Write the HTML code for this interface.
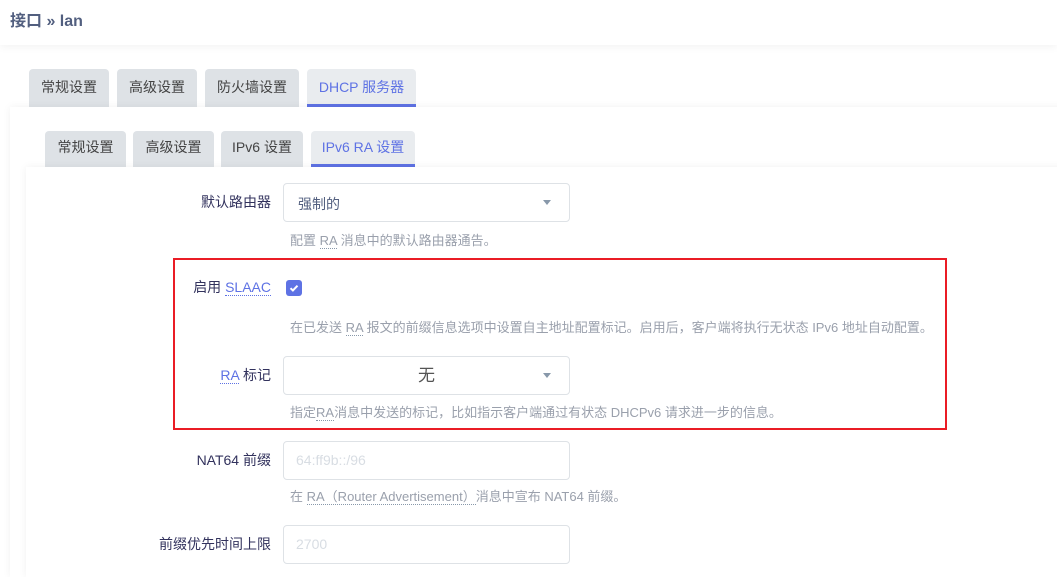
<!DOCTYPE html>
<html><head><meta charset="utf-8"><style>
body{margin:0;width:1057px;height:568px;overflow:hidden;background:#fff;font-family:"Liberation Sans","Noto Sans CJK SC",sans-serif;color:#32325d;position:relative}
.a{position:absolute}
.hdr{left:0;top:0;width:1057px;height:45px;background:#fff;box-shadow:0 2px 8px rgba(0,0,0,.05)}
.title{left:10px;top:7px;font-size:16px;font-weight:bold;color:#525f7f}
.tab{position:absolute;background:#dee2e6;border-radius:4px 4px 0 0;font-size:14px;color:#444;text-align:center;box-sizing:border-box}
.tab.on{background:#e9ecef;color:#5e72e4;border-bottom:3px solid #5e72e4}
.p1{left:10px;top:107px;width:1060px;height:470px;background:#fff;box-shadow:0 0 8px rgba(0,0,0,.06)}
.p2{left:26px;top:167px;width:1040px;height:410px;background:#fff;box-shadow:0 0 8px rgba(0,0,0,.06)}
.lbl{position:absolute;right:786px;font-size:14px;color:#32325d;white-space:nowrap}
.inp{position:absolute;left:283px;width:287px;height:39px;border:1px solid #dee2e6;border-radius:4px;box-sizing:border-box;background:#fff;font-size:14px}
.desc{position:absolute;left:290px;font-size:13px;color:#9aa0ac;white-space:nowrap}
.u{border-bottom:1px dotted #8898aa}
.lk{color:#5e72e4;border-bottom:1px dotted #5e72e4}
.arr{position:absolute;right:18px;top:16px;width:0;height:0;border-left:4px solid transparent;border-right:4px solid transparent;border-top:5px solid #8898aa}
</style></head><body>
<div class="a hdr"></div>
<div class="a title">接口 » lan</div>
<div class="tab" style="left:29px;top:69px;width:80px;height:38px;line-height:36px">常规设置</div>
<div class="tab" style="left:117px;top:69px;width:80px;height:38px;line-height:36px">高级设置</div>
<div class="tab" style="left:205px;top:69px;width:94px;height:38px;line-height:36px">防火墙设置</div>
<div class="tab on" style="left:307px;top:69px;width:109px;height:38px;line-height:36px">DHCP 服务器</div>
<div class="a p1"></div>
<div class="tab" style="left:45px;top:131px;width:81px;height:36px;line-height:33px">常规设置</div>
<div class="tab" style="left:133px;top:131px;width:81px;height:36px;line-height:33px">高级设置</div>
<div class="tab" style="left:221px;top:131px;width:82px;height:36px;line-height:33px">IPv6 设置</div>
<div class="tab on" style="left:311px;top:131px;width:104px;height:36px;line-height:33px">IPv6 RA 设置</div>
<div class="a p2"></div>

<div class="lbl" style="top:192px">默认路由器</div>
<div class="inp" style="top:183px;color:#525f7f;padding:10px 14px">强制的<div class="arr"></div></div>
<div class="desc" style="top:230px">配置 <span class="u">RA</span> 消息中的默认路由器通告。</div>

<div class="a" style="left:173px;top:258px;width:774px;height:172px;border:2px solid #ea1c25;box-sizing:border-box"></div>
<div class="lbl" style="top:277px">启用 <span class="lk">SLAAC</span></div>
<div class="a" style="left:286px;top:280px;width:16px;height:16px;background:#5e72e4;border-radius:3px"><svg width="16" height="16"><path d="M4.5 8.2l2.4 2.3 4.6-4.8" stroke="#fff" stroke-width="2" fill="none"/></svg></div>
<div class="desc" style="top:317px">在已发送 <span class="u">RA</span> 报文的前缀信息选项中设置自主地址配置标记。启用后，客户端将执行无状态 IPv6 地址自动配置。</div>
<div class="lbl" style="top:365px"><span class="lk">RA</span> 标记</div>
<div class="inp" style="top:356px;text-align:center;font-size:17px;color:#555;line-height:37px">无<div class="arr"></div></div>
<div class="desc" style="top:402px">指定<span class="u">RA</span>消息中发送的标记，比如指示客户端通过有状态 DHCPv6 请求进一步的信息。</div>

<div class="lbl" style="top:450px">NAT64 前缀</div>
<div class="inp" style="top:441px;color:#d8dde3;padding:10px 12px">64:ff9b::/96</div>
<div class="desc" style="top:486px">在 <span class="u">RA（Router Advertisement）</span>消息中宣布 NAT64 前缀。</div>
<div class="lbl" style="top:534px">前缀优先时间上限</div>
<div class="inp" style="top:525px;color:#d8dde3;padding:10px 12px">2700</div>
</body></html>
